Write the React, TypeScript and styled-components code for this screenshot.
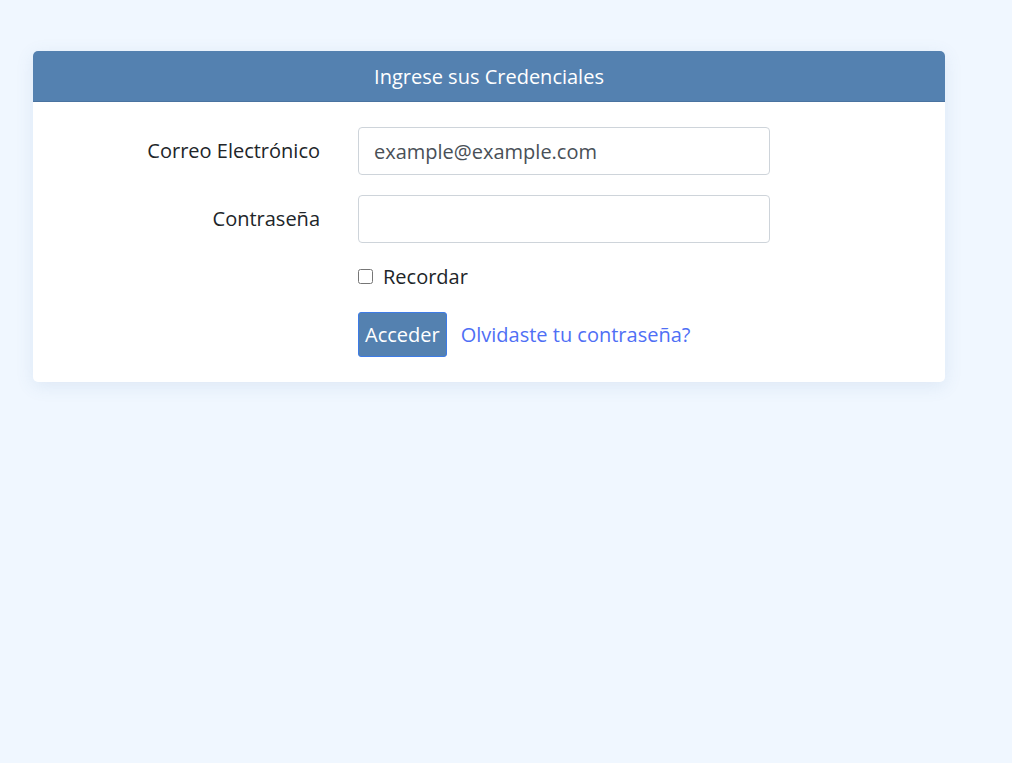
import React from "react";
import styled, { createGlobalStyle } from "styled-components";

const Global = createGlobalStyle`
  html, body { margin: 0; padding: 0; }
  body {
    background: #f0f7ff;
    font-family: "Open Sans", "Noto Sans", sans-serif;
    font-size: 20px;
    color: #212529;
    min-height: 763px;
  }
`;

const Page = styled.div`
  padding: 51px 67px 0 33px;
`;

const Card = styled.div`
  width: 912px;
  background: #fff;
  border-radius: 5px;
  box-shadow: 0 4px 18px rgba(80, 120, 170, 0.12);
  overflow: hidden;
`;

const Header = styled.div`
  height: 50px;
  background: #5481b0;
  border-bottom: 1px solid #4a73a0;
  color: #fff;
  display: flex;
  align-items: center;
  justify-content: center;
  font-size: 20px;
`;

const Body = styled.form`
  display: grid;
  grid-template-columns: 287px 412px;
  column-gap: 38px;
  row-gap: 20px;
  padding: 25px 0 25px 0;
  align-items: center;
`;

const Label = styled.label`
  text-align: right;
  font-size: 20px;
  line-height: 48px;
`;

const Input = styled.input`
  box-sizing: border-box;
  width: 412px;
  height: 48px;
  border: 1px solid #ced4da;
  border-radius: 4px;
  padding: 0 15px;
  font-family: "Open Sans", "Noto Sans", sans-serif;
  font-size: 20px;
  color: #495057;
  &::placeholder { color: #495057; }
`;

const Check = styled.label`
  grid-column: 2;
  display: flex;
  align-items: center;
  gap: 10px;
  font-size: 20px;
  line-height: 27px;
  margin-top: 0;
  input { margin: 0; width: 15px; height: 15px; }
`;

const Actions = styled.div`
  grid-column: 2;
  display: flex;
  align-items: center;
  gap: 14px;
  margin-top: 2px;
`;

const Button = styled.button`
  box-sizing: border-box;
  height: 45px;
  padding: 0 6px;
  background: #5481b0;
  color: #fff;
  border: 1px solid #3d7be6;
  border-radius: 3px;
  font-family: "Open Sans", "Noto Sans", sans-serif;
  font-size: 20px;
`;

const Link = styled.a`
  color: #4f6ff5;
  font-size: 20px;
  text-decoration: none;
`;

export default function App() {
  return (
    <>
      <Global />
      <Page>
        <Card>
          <Header>Ingrese sus Credenciales</Header>
          <Body>
            <Label>Correo Electrónico</Label>
            <Input placeholder="example@example.com" />
            <Label>Contraseña</Label>
            <Input type="password" />
            <Check>
              <input type="checkbox" />
              Recordar
            </Check>
            <Actions>
              <Button type="button">Acceder</Button>
              <Link href="#">Olvidaste tu contraseña?</Link>
            </Actions>
          </Body>
        </Card>
      </Page>
    </>
  );
}
